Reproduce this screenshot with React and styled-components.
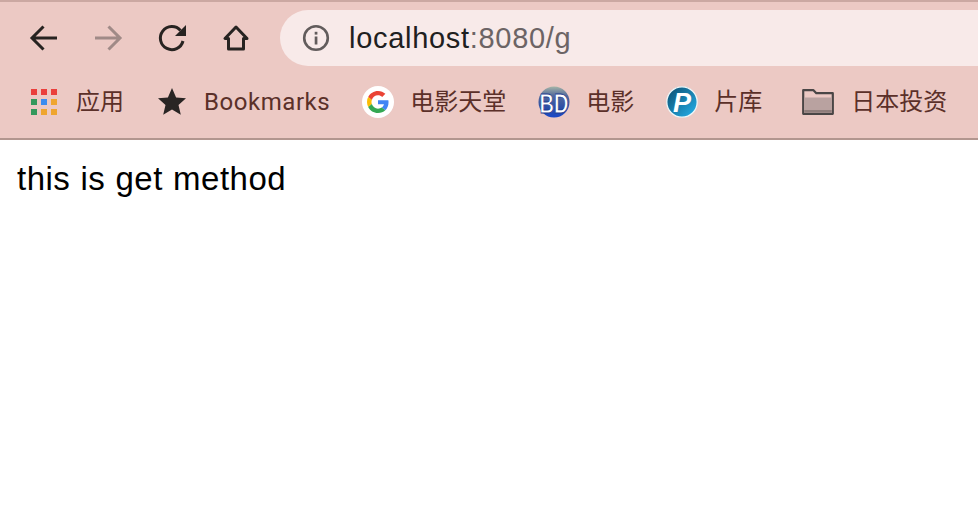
import React from 'react'
import styled, { createGlobalStyle } from 'styled-components'

const GlobalStyle = createGlobalStyle`
  html, body {
    margin: 0;
    padding: 0;
    background: #fff;
    overflow: hidden;
  }
`

const Browser = styled.div`
  width: 978px;
  height: 520px;
  display: flex;
  flex-direction: column;
  font-family: "Liberation Sans", Arial, sans-serif;
`

const Chrome = styled.header`
  height: 140px;
  box-sizing: border-box;
  background: #ecc9c4;
  border-top: 2px solid #cba8a2;
  border-bottom: 2px solid #b2968f;
  display: flex;
  flex-direction: column;
`

const Toolbar = styled.div`
  height: 56px;
  margin-top: 8px;
  padding-left: 16px;
  display: flex;
  align-items: center;
  gap: 8px;
`

const NavButton = styled.div`
  width: 56px;
  height: 56px;
  display: flex;
  align-items: center;
  justify-content: center;
  color: ${({ $disabled }) => ($disabled ? '#a08a87' : '#272321')};
`

const AddressBar = styled.div`
  flex: 1;
  height: 56px;
  margin-left: 8px;
  background: #f8eae9;
  border-radius: 28px 0 0 28px;
  display: flex;
  align-items: center;
  padding-left: 22px;
  gap: 19px;
`

const Url = styled.div`
  font-size: 29px;
  letter-spacing: 0.7px;
  color: #202020;
`

const UrlRest = styled.span`
  color: #6c6465;
`

const BookmarkBar = styled.nav`
  flex: 1;
  padding: 0 0 1px 28px;
  display: flex;
  align-items: center;
  gap: 32px;
`

const Bookmark = styled.div`
  display: flex;
  align-items: center;
  gap: ${({ $gap }) => $gap}px;
  margin-left: ${({ $extra }) => $extra || 0}px;
`

const BookmarkIcon = styled.div`
  width: 32px;
  height: 32px;
  display: flex;
  align-items: center;
  justify-content: center;
`

const BookmarkLabel = styled.span`
  font-family: "Roboto", "Noto Sans CJK SC", sans-serif;
  font-size: 24px;
  line-height: 32px;
  letter-spacing: ${({ $spacing }) => $spacing || 0}px;
  color: #5b3029;
`

const Content = styled.main`
  padding: 20px 17px;
  font-size: 33px;
  line-height: 38px;
  letter-spacing: 0.5px;
  word-spacing: 0.5px;
  color: #000;
`

const Back = () => (
  <svg width="32" height="32" viewBox="0 0 32 32" fill="none" stroke="currentColor" strokeWidth="3">
    <path d="M29 16H4M15.500 4.500 4 16l11.500 11.500" />
  </svg>
)

const Forward = () => (
  <svg width="32" height="32" viewBox="0 0 32 32" fill="none" stroke="currentColor" strokeWidth="3">
    <path d="M3 16h25M16.500 4.500 28 16 16.500 27.500" />
  </svg>
)

const Reload = () => (
  <svg width="32" height="32" viewBox="0 0 32 32" fill="none">
    <path d="M24.500 8.500A11.500 11.500 0 1 0 27 19" stroke="currentColor" strokeWidth="3" />
    <path d="M30 3v11H19z" fill="currentColor" />
  </svg>
)

const Home = () => (
  <svg width="32" height="32" viewBox="0 0 32 32" fill="none" stroke="currentColor" strokeWidth="3">
    <path d="M16 5 5 16.500h3.500V27h15V16.500H27z" strokeLinejoin="round" />
  </svg>
)

const Info = () => (
  <svg width="28" height="28" viewBox="0 0 28 28" fill="none">
    <circle cx="14" cy="14" r="11.800" stroke="#625c5c" strokeWidth="2.600" />
    <rect x="12.700" y="12.500" width="2.700" height="8" fill="#625c5c" />
    <rect x="12.700" y="7.800" width="2.700" height="2.800" fill="#625c5c" />
  </svg>
)

const appColors = ['#ea3f3c', '#ea3f3c', '#ea3f3c', '#34985c', '#3b8cf0', '#efa52f', '#34985c', '#efa52f', '#efa52f']

const Apps = () => (
  <svg width="26" height="26" viewBox="0 0 26 26">
    {appColors.map((color, i) => (
      <rect key={i} x={(i % 3) * 10} y={Math.floor(i / 3) * 10} width="6" height="6" fill={color} />
    ))}
  </svg>
)

const Star = () => (
  <svg width="32" height="32" viewBox="0 0 32 32">
    <path d="M16 2 20.100 11.500 30 12.300 22.500 18.900 24.800 28.800 16 23.500 7.200 28.800 9.500 18.900 2 12.300 11.900 11.500z" fill="#292524" />
  </svg>
)

const GoogleIcon = () => (
  <svg width="32" height="32" viewBox="0 0 32 32">
    <circle cx="16" cy="16" r="16" fill="#fff" />
    <g transform="translate(5 5) scale(0.4583)">
      <path fill="#EA4335" d="M24 9.500c3.540 0 6.710 1.220 9.210 3.600l6.850-6.850C35.900 2.380 30.470 0 24 0 14.620 0 6.510 5.380 2.560 13.220l7.980 6.190C12.430 13.720 17.740 9.500 24 9.500z" />
      <path fill="#4285F4" d="M46.980 24.550c0-1.570-.15-3.090-.38-4.550H24v9.020h12.940c-.58 2.960-2.260 5.480-4.780 7.180l7.730 6c4.510-4.180 7.090-10.360 7.090-17.650z" />
      <path fill="#FBBC05" d="M10.530 28.590c-.48-1.450-.76-2.990-.76-4.590s.27-3.140.76-4.590l-7.980-6.190C.92 16.460 0 20.120 0 24c0 3.880.92 7.540 2.560 10.780l7.970-6.190z" />
      <path fill="#34A853" d="M24 48c6.480 0 11.930-2.130 15.890-5.810l-7.730-6c-2.150 1.450-4.920 2.300-8.160 2.300-6.260 0-11.570-4.220-13.470-9.910l-7.980 6.190C6.510 42.620 14.620 48 24 48z" />
    </g>
  </svg>
)

const BdText = styled.text`
  font-family: "Liberation Sans", sans-serif;
  font-size: 20px;
  font-weight: 700;
  fill: #fff;
  stroke: #1f3f90;
  stroke-width: 0.600px;
`

const BdIcon = () => (
  <svg width="32" height="32" viewBox="0 0 32 32">
    <defs>
      <linearGradient id="bdGlobe" x1="0" y1="0" x2="0" y2="1">
        <stop offset="0" stopColor="#a5b5a8" />
        <stop offset="0.3" stopColor="#52689a" />
        <stop offset="0.7" stopColor="#2a4da8" />
        <stop offset="1" stopColor="#1a48c8" />
      </linearGradient>
    </defs>
    <circle cx="16" cy="16" r="15.500" fill="url(#bdGlobe)" />
    <BdText x="1.500" y="19.300" transform="scale(1 1.400)">BD</BdText>
  </svg>
)

const PText = styled.text`
  font-family: "Liberation Sans", sans-serif;
  font-size: 27px;
  font-weight: 700;
  font-style: italic;
  fill: #fff;
`

const PIcon = () => (
  <svg width="32" height="32" viewBox="0 0 32 32">
    <defs>
      <linearGradient id="pBall" x1="0" y1="0" x2="1" y2="1">
        <stop offset="0.1" stopColor="#0f5679" />
        <stop offset="0.9" stopColor="#22a9e2" />
      </linearGradient>
    </defs>
    <circle cx="16" cy="16" r="15.200" fill="url(#pBall)" stroke="#eef6f8" strokeWidth="1.300" />
    <PText x="7" y="25.500">P</PText>
  </svg>
)

const Folder = () => (
  <svg width="32" height="26" viewBox="0 0 32 26">
    <path d="M1.200 1.200h10.300l2.800 3H30.800v20.600H1.200z" fill="#ecc9c4" stroke="#4a4646" strokeWidth="2.200" strokeLinejoin="round" />
    <rect x="2.300" y="8.500" width="27.400" height="15.200" fill="#b9a2a0" />
    <rect x="2.300" y="21" width="27.400" height="2.700" fill="#8f7d7b" />
  </svg>
)

const bookmarks = [
  { label: '应用', icon: <Apps />, gap: 16 },
  { label: 'Bookmarks', icon: <Star />, gap: 16, spacing: 0.55 },
  { label: '电影天堂', icon: <GoogleIcon />, gap: 16 },
  { label: '电影', icon: <BdIcon />, gap: 16 },
  { label: '片库', icon: <PIcon />, gap: 16 },
  { label: '日本投资', icon: <Folder />, gap: 17, extra: 8 },
]

const App = () => (
  <Browser>
    <GlobalStyle />
    <Chrome>
      <Toolbar>
        <NavButton><Back /></NavButton>
        <NavButton $disabled><Forward /></NavButton>
        <NavButton><Reload /></NavButton>
        <NavButton><Home /></NavButton>
        <AddressBar>
          <Info />
          <Url>localhost<UrlRest>:8080/g</UrlRest></Url>
        </AddressBar>
      </Toolbar>
      <BookmarkBar>
        {bookmarks.map(({ label, icon, gap, spacing, extra }) => (
          <Bookmark key={label} $gap={gap} $extra={extra}>
            <BookmarkIcon>{icon}</BookmarkIcon>
            <BookmarkLabel $spacing={spacing}>{label}</BookmarkLabel>
          </Bookmark>
        ))}
      </BookmarkBar>
    </Chrome>
    <Content>this is get method</Content>
  </Browser>
)

export default App
